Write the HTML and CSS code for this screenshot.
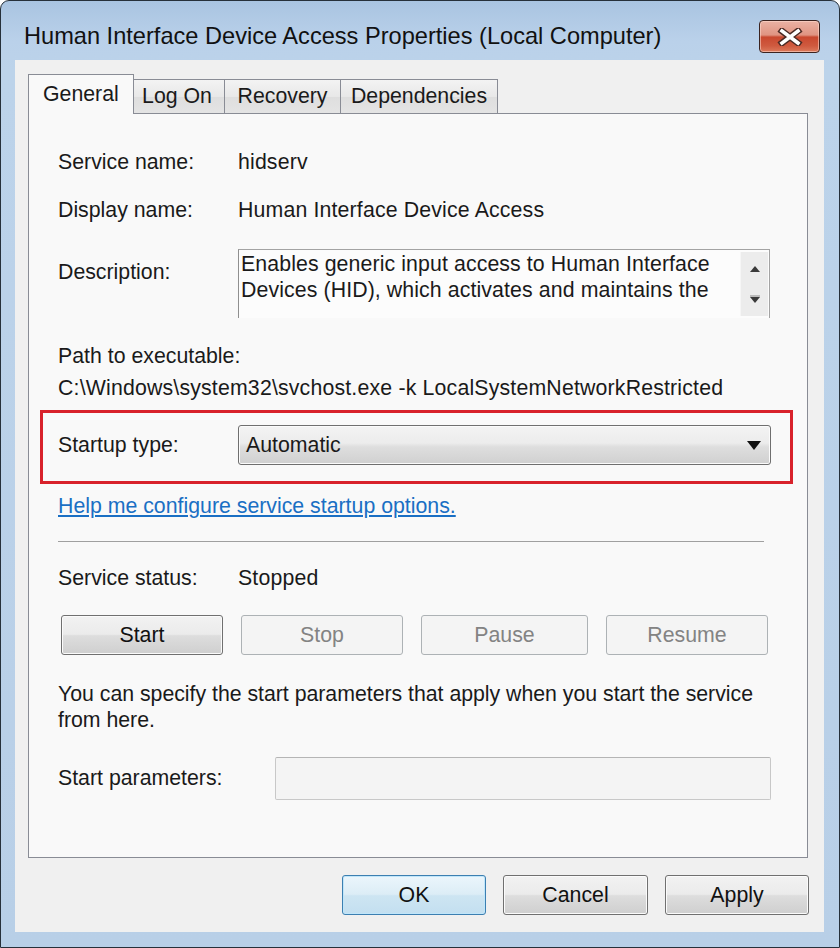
FILE: index.html
```html
<!DOCTYPE html>
<html>
<head>
<meta charset="utf-8">
<title>Human Interface Device Access Properties</title>
<link rel="stylesheet" href="styles.css">
</head>
<body>
<div class="window">
  <div class="titlebar">
    <div class="title">Human Interface Device Access Properties (Local Computer)</div>
    <div class="close">
      <svg width="26" height="18" viewBox="0 0 26 18">
        <path d="M5 3 L21 15 M21 3 L5 15" stroke="#4b2a24" stroke-width="6.5" stroke-linecap="square" fill="none"/>
        <path d="M5 3 L21 15 M21 3 L5 15" stroke="#ffffff" stroke-width="3.6" stroke-linecap="square" fill="none"/>
      </svg>
    </div>
  </div>
  <div class="client">
    <div class="tabs">
      <div class="tab active tab-general">General</div>
      <div class="tab tab-logon">Log On</div>
      <div class="tab tab-recovery">Recovery</div>
      <div class="tab tab-deps">Dependencies</div>
    </div>
    <div class="panel">
      <div class="row r-service"><span class="label">Service name:</span><span class="value">hidserv</span></div>
      <div class="row r-display"><span class="label">Display name:</span><span class="value">Human Interface Device Access</span></div>
      <div class="desc-row">
        <span class="label desc-label">Description:</span>
        <div class="desc-box">
          <div class="desc-text">Enables generic input access to Human Interface<br>Devices (HID), which activates and maintains the</div>
          <div class="scrollbar">
            <svg width="12" height="8" viewBox="0 0 12 8"><path d="M6 1 L11 7 L1 7 Z" fill="#3a3a3a"/></svg>
            <svg width="12" height="10" viewBox="0 0 12 10"><path d="M1 2 H11" stroke="#8a8a8a" stroke-width="1"/><path d="M1 3 L11 3 L6 9 Z" fill="#3a3a3a"/></svg>
          </div>
        </div>
      </div>
      <div class="path-block">
        <div>Path to executable:</div>
        <div class="path-value">C:\Windows\system32\svchost.exe -k LocalSystemNetworkRestricted</div>
      </div>
      <div class="highlight">
        <span class="label">Startup type:</span>
        <div class="combo">
          <span>Automatic</span>
          <svg width="14" height="9" viewBox="0 0 14 9"><path d="M0 0 L14 0 L7 9 Z" fill="#111"/></svg>
        </div>
      </div>
      <div class="link">Help me configure service startup options.</div>
      <div class="sep"></div>
      <div class="row r-status"><span class="label">Service status:</span><span class="value">Stopped</span></div>
      <div class="svc-buttons">
        <div class="btn w162">Start</div>
        <div class="btn disabled w162">Stop</div>
        <div class="btn disabled w167">Pause</div>
        <div class="btn disabled w162">Resume</div>
      </div>
      <div class="para">You can specify the start parameters that apply when you start the service<br>from here.</div>
      <div class="row r-params"><span class="label label-wide">Start parameters:</span><div class="input"></div></div>
    </div>
    <div class="dialog-buttons">
      <div class="btn default w144">OK</div>
      <div class="btn w145">Cancel</div>
      <div class="btn w144">Apply</div>
    </div>
  </div>
</div>
</body>
</html>
```

FILE: styles.css
```css
* { box-sizing: border-box; }
html, body { margin: 0; padding: 0; }
body {
  width: 840px;
  height: 948px;
  background: #ffffff;
  font-family: "Liberation Sans", Arial, sans-serif;
  font-size: 21.3px;
  color: #1a1a1a;
  overflow: hidden;
}
.window {
  width: 840px;
  height: 948px;
  border: 1px solid #26303a;
  border-radius: 9px 9px 0 0;
  background: linear-gradient(#a9c4e1 0px, #bad1ea 40px, #bcd3ea 70px, #b8cfe7 100%);
  display: flex;
  flex-direction: column;
  overflow: hidden;
}
.titlebar {
  height: 59px;
  flex: none;
  display: flex;
  align-items: center;
  padding: 12px 19px 0 23px;
}
.title {
  font-size: 23.6px;
  color: #111;
  white-space: nowrap;
}
.close {
  margin-left: auto;
  width: 61px;
  height: 33px;
  border: 1px solid #3b2320;
  border-radius: 4px;
  background: linear-gradient(#eab2a4 0%, #e09482 45%, #c9482f 52%, #cf5a3f 80%, #dc7a5c 100%);
  box-shadow: inset 0 0 0 1px rgba(255, 220, 210, 0.55);
  display: flex;
  align-items: center;
  justify-content: center;
}
.client {
  margin: 0 15px 0 14px;
  height: 872px;
  background: #f0f0f0;
  padding: 14px 16px 17px 13px;
  display: flex;
  flex-direction: column;
}
.tabs {
  display: flex;
  align-items: flex-end;
  height: 40px;
  margin-bottom: -1px;
  position: relative;
  z-index: 1;
}
.tab {
  height: 34px;
  margin-bottom: 1px;
  margin-left: -1px;
  border: 1px solid #898c95;
  border-bottom: none;
  background: linear-gradient(#f3f3f3, #e8e8e8 50%, #dedede 51%, #e4e4e4);
  display: flex;
  align-items: center;
  justify-content: center;
  white-space: nowrap;
  color: #1a1a1a;
}
.tab.active {
  height: 40px;
  margin-bottom: 0;
  margin-left: 0;
  background: #f9f9f9;
  justify-content: flex-start;
  padding-left: 14px;
  position: relative;
  z-index: 2;
}
.tab-logon { padding-right: 4px; }
.tab-general { width: 106px; }
.tab-logon { width: 92px; }
.tab-recovery { width: 117px; }
.tab-deps { width: 158px; }
.panel {
  height: 745px;
  flex: none;
  border: 1px solid #898c95;
  background: #f9f9f9;
  padding: 0 36px 0 29px;
  display: flex;
  flex-direction: column;
}
.row {
  display: flex;
  align-items: center;
  height: 30px;
  flex: none;
}
.label {
  width: 180px;
  flex: none;
  white-space: nowrap;
}
.label-wide { width: 217px; }
.value { white-space: nowrap; letter-spacing: 0.15px; }
.r-service { margin-top: 33px; }
.r-display { margin-top: 18px; }
.desc-row {
  margin-top: 24px;
  display: flex;
  align-items: flex-start;
  height: 69px;
  flex: none;
}
.desc-label { margin-top: 8px; line-height: 30px; }
.desc-box {
  width: 532px;
  height: 69px;
  border: 1px solid #a3a3a3;
  border-bottom: none;
  border-left-color: #8f8f8f;
  background: #fcfcfc;
  display: flex;
}
.desc-text {
  flex: 1;
  line-height: 26px;
  padding: 1px 0 0 2px;
  white-space: nowrap;
  overflow: hidden;
  letter-spacing: 0.1px;
}
.scrollbar {
  width: 28px;
  margin: 2px 1px 0 0;
  height: 64px;
  background: #ececec;
  border-left: 1px solid #f6f6f6;
  display: flex;
  flex-direction: column;
  align-items: center;
  justify-content: space-between;
  padding: 13px 0 12px;
}
.path-block {
  margin-top: 22px;
  line-height: 32px;
  white-space: nowrap;
}
.path-value { letter-spacing: 0.17px; }
.highlight {
  margin: 6px -22px 0 -18px;
  border: 3px solid #d8222b;
  padding: 12px 19px 16px 15px;
  display: flex;
  align-items: center;
  flex: none;
}
.combo {
  flex: 1;
  height: 40px;
  border: 1px solid #6f6f6f;
  border-radius: 3px;
  background: linear-gradient(#f3f3f3 0%, #ececec 45%, #dedede 55%, #d0d0d0 100%);
  box-shadow: inset 0 0 0 1px #fbfbfb;
  display: flex;
  align-items: center;
  justify-content: space-between;
  padding: 0 9px 0 7px;
}
.link {
  margin-top: 7px;
  height: 30px;
  line-height: 30px;
  color: #1a6fc4;
  text-decoration: underline;
  white-space: nowrap;
}
.sep {
  margin: 20px 7px 0 0;
  height: 1px;
  background: #a0a0a0;
  flex: none;
}
.r-status { margin-top: 21px; }
.svc-buttons {
  margin-top: 22px;
  padding-left: 3px;
  display: flex;
  gap: 18px;
  flex: none;
}
.btn {
  height: 40px;
  flex: none;
  border: 1px solid #707070;
  border-radius: 3px;
  background: linear-gradient(#f2f2f2 0%, #ebebeb 48%, #dddddd 52%, #cfcfcf 100%);
  box-shadow: inset 0 0 0 1px #fbfbfb;
  display: flex;
  align-items: center;
  justify-content: center;
  color: #111;
}
.btn.disabled {
  border-color: #adb2b5;
  background: #f4f4f4;
  box-shadow: none;
  color: #838383;
}
.btn.default {
  border-color: #3c7fb1;
  background: linear-gradient(#ebf6fc 0%, #dcedf6 48%, #cde5f2 52%, #c3dff0 100%);
  box-shadow: inset 0 0 0 1px #c0e6fa;
}
.w162 { width: 162px; }
.w167 { width: 167px; }
.w144 { width: 144px; }
.w145 { width: 145px; }
.para {
  margin-top: 26px;
  line-height: 26px;
  white-space: nowrap;
  letter-spacing: -0.02px;
}
.r-params { margin-top: 24px; height: 43px; }
.input {
  flex: 1;
  height: 43px;
  border: 1px solid #c8c8c8;
  border-top-color: #b5b5b5;
  border-radius: 2px;
  background: #f4f4f4;
}
.dialog-buttons {
  margin-top: 17px;
  margin-right: -1px;
  display: flex;
  justify-content: flex-end;
  gap: 17px;
}
```
